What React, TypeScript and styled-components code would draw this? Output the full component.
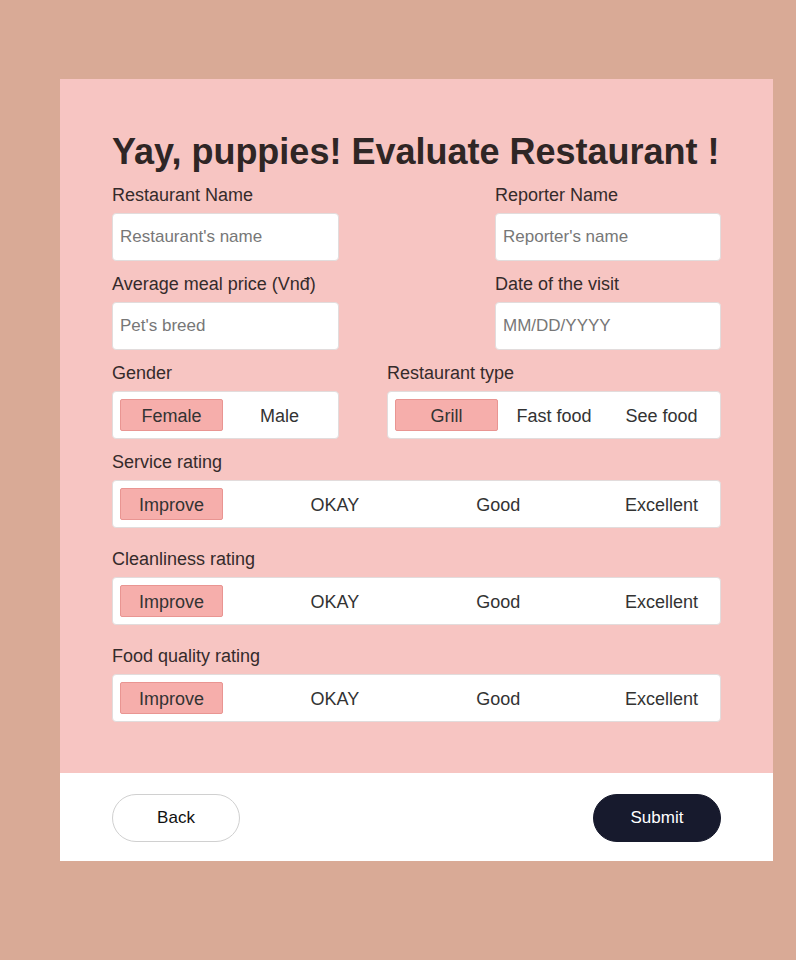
import React, { useState } from "react";
import styled, { createGlobalStyle } from "styled-components";

const GlobalStyle = createGlobalStyle`
  html, body {
    margin: 0;
    padding: 0;
    background: #d9aa96;
    font-family: "Liberation Sans", Arial, Helvetica, sans-serif;
  }
  * { box-sizing: border-box; }
`;

const Page = styled.div`
  min-height: 960px;
  padding: 79px 0 0 60px;
`;

const Card = styled.div`
  width: 713px;
  display: flex;
  flex-direction: column;
`;

const FormBody = styled.div`
  background: #f7c5c2;
  padding: 53px 52px 51px;
  display: flex;
  flex-direction: column;
`;

const Title = styled.h1`
  margin: 0 0 13px;
  font-size: 36px;
  line-height: 40px;
  font-weight: 700;
  color: #2f2625;
  white-space: nowrap;
`;

const Row = styled.div<{ $gap?: number }>`
  display: flex;
  justify-content: space-between;
  margin-top: ${(p) => p.$gap ?? 13}px;
  &:first-of-type { margin-top: 0; }
`;

const Field = styled.div<{ $w?: number }>`
  display: flex;
  flex-direction: column;
  gap: 8px;
  width: ${(p) => (p.$w ? `${p.$w}px` : "100%")};
`;

const Label = styled.label`
  font-size: 18px;
  line-height: 20px;
  color: #352b2b;
`;

const Input = styled.input`
  height: 48px;
  width: 100%;
  border: 1px solid #e2dcdc;
  border-radius: 4px;
  background: #fff;
  padding: 0 7px;
  font-family: inherit;
  font-size: 17px;
  color: #333;
  outline: none;
  &::placeholder { color: #777; }
`;

const Segment = styled.div`
  height: 48px;
  background: #fff;
  border: 1px solid #e2dcdc;
  border-radius: 4px;
  padding: 7px;
  display: flex;
  justify-content: space-between;
  align-items: center;
`;

const Option = styled.button<{ $active: boolean }>`
  width: 103px;
  height: 32px;
  border-radius: 2px;
  border: 1px solid ${(p) => (p.$active ? "#e99592" : "transparent")};
  background: ${(p) => (p.$active ? "#f6aeab" : "transparent")};
  font-family: inherit;
  font-size: 18px;
  color: #333;
  padding: 3px 0 0;
  cursor: pointer;
  white-space: nowrap;
`;

const Footer = styled.div`
  height: 88px;
  background: #fff;
  padding: 21px 52px 0;
  display: flex;
  justify-content: space-between;
  align-items: flex-start;
`;

const PillButton = styled.button<{ $primary?: boolean }>`
  width: 128px;
  height: 48px;
  border-radius: 24px;
  border: 1px solid ${(p) => (p.$primary ? "#171a2d" : "#d0d0d0")};
  background: ${(p) => (p.$primary ? "#171a2d" : "#fff")};
  color: ${(p) => (p.$primary ? "#fff" : "#111")};
  font-family: inherit;
  font-size: 17px;
  cursor: pointer;
`;

function SegmentGroup({ options }: { options: string[] }) {
  const [sel, setSel] = useState(0);
  return (
    <Segment>
      {options.map((o, i) => (
        <Option key={o} type="button" $active={i === sel} onClick={() => setSel(i)}>
          {o}
        </Option>
      ))}
    </Segment>
  );
}

const ratings = ["Improve", "OKAY", "Good", "Excellent"];

export default function App() {
  return (
    <>
      <GlobalStyle />
      <Page>
        <Card>
          <FormBody>
            <Title>Yay, puppies! Evaluate Restaurant !</Title>
            <Row>
              <Field $w={227}>
                <Label>Restaurant Name</Label>
                <Input placeholder="Restaurant's name" />
              </Field>
              <Field $w={226}>
                <Label>Reporter Name</Label>
                <Input placeholder="Reporter's name" />
              </Field>
            </Row>
            <Row>
              <Field $w={227}>
                <Label>Average meal price (Vnđ)</Label>
                <Input placeholder="Pet's breed" />
              </Field>
              <Field $w={226}>
                <Label>Date of the visit</Label>
                <Input placeholder="MM/DD/YYYY" />
              </Field>
            </Row>
            <Row>
              <Field $w={227}>
                <Label>Gender</Label>
                <SegmentGroup options={["Female", "Male"]} />
              </Field>
              <Field $w={334}>
                <Label>Restaurant type</Label>
                <SegmentGroup options={["Grill", "Fast food", "See food"]} />
              </Field>
            </Row>
            <Row>
              <Field>
                <Label>Service rating</Label>
                <SegmentGroup options={ratings} />
              </Field>
            </Row>
            <Row $gap={21}>
              <Field>
                <Label>Cleanliness rating</Label>
                <SegmentGroup options={ratings} />
              </Field>
            </Row>
            <Row $gap={21}>
              <Field>
                <Label>Food quality rating</Label>
                <SegmentGroup options={ratings} />
              </Field>
            </Row>
          </FormBody>
          <Footer>
            <PillButton type="button">Back</PillButton>
            <PillButton type="button" $primary>
              Submit
            </PillButton>
          </Footer>
        </Card>
      </Page>
    </>
  );
}
